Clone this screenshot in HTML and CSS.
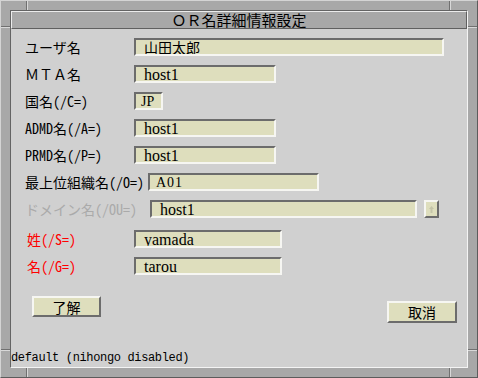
FILE: index.html
```html
<!DOCTYPE html>
<html lang="ja">
<head>
<meta charset="utf-8">
<title>OR名詳細情報設定</title>
<link rel="stylesheet" href="styles.css">
</head>
<body>
<div class="window">
  <div class="frame-inner">
    <div class="titlebar"><span class="fw">OR</span>名詳細情報設定</div>
    <div class="content">
      <div class="form">
        <div class="row">
          <span class="label">ユーザ名</span>
          <span class="field w-user cjk">山田太郎</span>
        </div>
        <div class="row">
          <span class="label"><span class="fw">MTA</span>名</span>
          <span class="field w-mid">host1</span>
        </div>
        <div class="row">
          <span class="label">国名(/C=)</span>
          <span class="field w-c">JP</span>
        </div>
        <div class="row">
          <span class="label">ADMD名(/A=)</span>
          <span class="field w-mid">host1</span>
        </div>
        <div class="row">
          <span class="label">PRMD名(/P=)</span>
          <span class="field w-mid">host1</span>
        </div>
        <div class="row">
          <span class="label auto">最上位組織名(/O=)</span>
          <span class="field w-o">A01</span>
        </div>
        <div class="row">
          <span class="label auto disabled">ドメイン名(/OU=)</span>
          <span class="field w-ou">host1</span>
          <span class="mini-btn"><svg width="7" height="9" viewBox="0 0 7 9"><path d="M3.5 1 L6 4 H4.5 V8 H2.5 V4 H1 Z" fill="#c4c4a8"/></svg></span>
        </div>
        <div class="row sep">
          <span class="label req">姓(/S=)</span>
          <span class="field w-name">yamada</span>
        </div>
        <div class="row">
          <span class="label req">名(/G=)</span>
          <span class="field w-name">tarou</span>
        </div>
      </div>
      <div class="buttons">
        <button class="btn ok">了解</button>
        <button class="btn cancel">取消</button>
      </div>
      <div class="status">default (nihongo disabled)</div>
    </div>
  </div>
  <span class="mark mark-t1"></span>
  <span class="mark mark-t2"></span>
  <span class="mark mark-b1"></span>
  <span class="mark mark-b2"></span>
  <span class="mark-h mark-l1"></span>
  <span class="mark-h mark-l2"></span>
  <span class="mark-h mark-r1"></span>
  <span class="mark-h mark-r2"></span>
</div>
</body>
</html>
```

FILE: styles.css
```css
html, body {
  margin: 0;
  padding: 0;
  background: #a8a8a8;
}

.window {
  position: relative;
  width: 478px;
  height: 378px;
  box-sizing: border-box;
  background: #a8a8a8;
  border: 1px solid;
  border-color: #d4d4d4 #5c5c5c #5c5c5c #d4d4d4;
  padding: 9px;
  font-family: "Noto Sans CJK JP", sans-serif;
  font-feature-settings: "hwid" 1;
}

.frame-inner {
  height: 100%;
  box-sizing: border-box;
  border: 1px solid;
  border-color: #646464 #f4f4f4 #f4f4f4 #646464;
  display: flex;
  flex-direction: column;
}

.titlebar {
  height: 18px;
  box-sizing: border-box;
  border: 1px solid;
  border-color: #ececec #606060 #606060 #ececec;
  background: #a8a8a8;
  text-align: center;
  font-size: 15px;
  line-height: 16px;
  color: #000;
  font-feature-settings: normal;
}

.fw {
  font-feature-settings: "fwid" 1;
}

.content {
  flex: 1;
  background: #d0d0d0;
  display: flex;
  flex-direction: column;
}

.form {
  display: flex;
  flex-direction: column;
  gap: 9px;
  padding: 9px 0 0 14px;
}

.row {
  display: flex;
  align-items: center;
  height: 18px;
}

.row.sep {
  margin-top: 3px;
}

.label {
  width: 109px;
  flex: none;
  font-size: 14px;
  line-height: 18px;
  color: #000;
  white-space: nowrap;
}

.label.auto {
  width: auto;
  margin-right: 4px;
}

.label.disabled {
  color: #aaaaaa;
  margin-right: 13px;
}

.label.req {
  color: #ff0000;
  padding-left: 2px;
  width: 107px;
}

.field {
  box-sizing: border-box;
  height: 18px;
  border: 2px solid;
  border-color: #6c6c6c #f6f6f2 #f6f6f2 #6c6c6c;
  background: #dedebd;
  padding-left: 8px;
  font-family: "Liberation Serif", "Noto Sans CJK JP", serif;
  font-size: 16px;
  line-height: 15px;
  color: #000;
  white-space: nowrap;
  overflow: hidden;
}

.field.cjk {
  font-family: "Noto Sans CJK JP", sans-serif;
  font-size: 14px;
  line-height: 14px;
}

.w-user { width: 310px; }
.w-mid { width: 142px; }
.w-c { width: 29px; padding-left: 5px; font-size: 14px; }
.w-o { width: 171px; padding-left: 6px; font-size: 14px; letter-spacing: 1px; }
.w-ou { width: 267px; }
.w-name { width: 148px; }

.mini-btn {
  box-sizing: border-box;
  width: 15px;
  height: 18px;
  margin-left: 7px;
  border: 2px solid;
  border-color: #f6f6f2 #6c6c6c #6c6c6c #f6f6f2;
  background: #dedebd;
  display: flex;
  align-items: center;
  justify-content: center;
}

.buttons {
  display: flex;
  justify-content: space-between;
  align-items: flex-start;
  padding: 21px 10px 0 21px;
}

.btn {
  box-sizing: border-box;
  margin: 0;
  padding: 0;
  border: 2px solid;
  border-color: #f6f6f2 #6c6c6c #6c6c6c #f6f6f2;
  background: #dedebd;
  font-family: "Noto Sans CJK JP", sans-serif;
  font-size: 14px;
  line-height: 16px;
  color: #000;
}

.btn.ok {
  width: 69px;
  height: 21px;
}

.btn.cancel {
  width: 70px;
  height: 22px;
  margin-top: 5px;
}

.status {
  margin-top: auto;
  height: 16px;
  font-family: "Liberation Mono", monospace;
  font-size: 12px;
  letter-spacing: -0.35px;
  line-height: 14px;
  color: #000;
  white-space: nowrap;
}

.mark, .mark-h {
  position: absolute;
  box-sizing: border-box;
}

.mark {
  width: 2px;
  height: 9px;
  border-left: 1px solid #707070;
  border-right: 1px solid #d8d8d8;
}

.mark-h {
  width: 9px;
  height: 2px;
  border-top: 1px solid #707070;
  border-bottom: 1px solid #d8d8d8;
}

.mark-t1 { left: 25px; top: 0; }
.mark-t2 { left: 448px; top: 0; }
.mark-b1 { left: 25px; bottom: 0; }
.mark-b2 { left: 448px; bottom: 0; }
.mark-l1 { left: 0; top: 25px; }
.mark-l2 { left: 0; top: 348px; }
.mark-r1 { right: 0; top: 25px; }
.mark-r2 { right: 0; top: 348px; }
```
